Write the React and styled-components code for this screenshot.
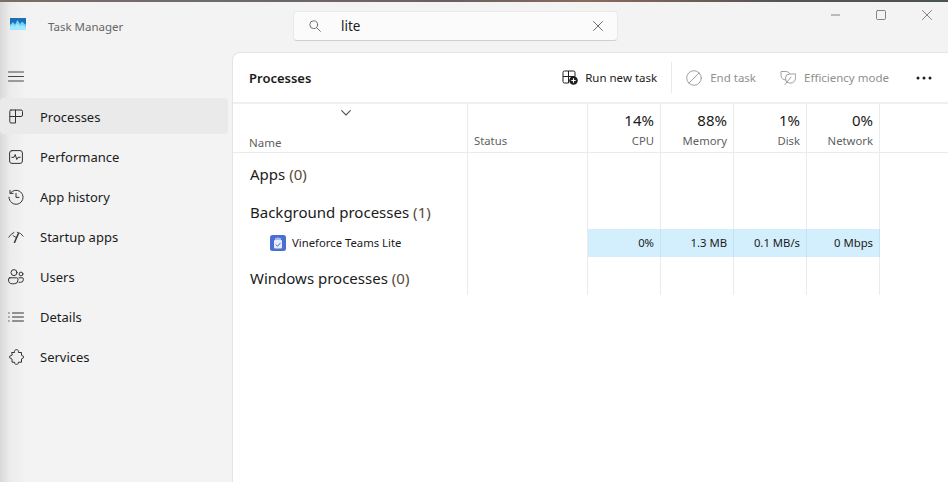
import React from 'react';
import styled, { createGlobalStyle } from 'styled-components';

const GlobalStyle = createGlobalStyle`
  html, body {
    margin: 0;
    height: 100%;
    overflow: hidden;
  }
  body {
    font-family: "Noto Sans", "Open Sans", "Liberation Sans", sans-serif;
    color: #1b1b1b;
  }
  * {
    box-sizing: border-box;
  }
`;

const Window = styled.div`
  width: 948px;
  height: 482px;
  display: flex;
  flex-direction: column;
  background: linear-gradient(90deg, #d9d9d9 0, #ececec 10px, #f2f2f2 24px, #f3f3f3 34px);
`;

const TopEdge = styled.div`
  height: 2px;
  flex: none;
  background: linear-gradient(90deg, #7b6d68 0, #6f6a6c 22%, #6a5f60 48%, #8a6a5e 62%, #5b5555 80%, #4a5252 100%);
`;

const TitleBar = styled.header`
  height: 50px;
  flex: none;
  display: flex;
  align-items: flex-start;
`;

const AppBrand = styled.div`
  width: 293px;
  flex: none;
  display: flex;
  align-items: flex-start;
  gap: 22px;
  padding: 16px 0 0 10px;
`;

const AppTitle = styled.span`
  font-size: 11.5px;
  line-height: 18px;
  color: #666;
`;

const SearchBox = styled.div`
  width: 325px;
  height: 30px;
  margin-top: 9px;
  flex: none;
  display: flex;
  align-items: center;
  padding: 0 14px 0 15px;
  background: #fbfbfb;
  border: 1px solid #e9e9e9;
  border-bottom-color: #d0d0d0;
  border-radius: 4px;
`;

const SearchText = styled.span`
  flex: 1;
  margin-left: 20px;
  font-size: 13.5px;
  color: #1b1b1b;
`;

const WindowControls = styled.div`
  margin-left: auto;
  display: flex;
  align-items: flex-start;
  gap: 36px;
  padding: 8px 16px 0 0;
`;

const Body = styled.div`
  flex: 1;
  display: flex;
  min-height: 0;
`;

const Sidebar = styled.nav`
  width: 232px;
  flex: none;
  display: flex;
  flex-direction: column;
  padding-right: 4px;
`;

const MenuButton = styled.div`
  height: 46px;
  flex: none;
  display: flex;
  align-items: center;
  padding: 2px 0 0 8px;
`;

const NavList = styled.ul`
  list-style: none;
  margin: 0;
  padding: 0;
  display: flex;
  flex-direction: column;
  gap: 4px;
`;

const NavItem = styled.li`
  height: 36px;
  display: flex;
  align-items: center;
  gap: 16px;
  padding: 1px 0 0 8px;
  border-radius: 4px;
  font-size: 13px;
  color: #1b1b1b;
  background: ${(p) => (p.$active ? '#eaeaea' : 'transparent')};
`;

const NavIcon = styled.span`
  width: 16px;
  height: 16px;
  flex: none;
  display: flex;
  align-items: center;
  justify-content: center;
`;

const Panel = styled.main`
  flex: 1;
  min-width: 0;
  display: flex;
  flex-direction: column;
  background: #fff;
  border-left: 1px solid #e5e5e5;
  border-top: 1px solid #e5e5e5;
  border-top-left-radius: 8px;
`;

const Toolbar = styled.div`
  height: 51px;
  flex: none;
  display: flex;
  align-items: center;
  padding: 0 16px;
  border-bottom: 2px solid #efefef;
`;

const PageTitle = styled.h1`
  margin: 0;
  font-size: 13px;
  font-weight: 600;
  color: #1b1b1b;
`;

const Actions = styled.div`
  margin-left: auto;
  display: flex;
  align-items: center;
`;

const ActionButton = styled.div`
  display: flex;
  align-items: center;
  gap: ${(p) => p.$iconGap || 8}px;
  font-size: 11.5px;
  color: ${(p) => (p.$disabled ? '#8f8f8f' : '#1b1b1b')};
  margin-right: ${(p) => p.$gap || 0}px;
`;

const Divider = styled.div`
  width: 1px;
  height: 31px;
  background: #eaeaea;
  margin: 0 14px;
`;

const Table = styled.div`
  display: flex;
  flex-direction: column;
`;

const Row = styled.div`
  display: grid;
  grid-template-columns: 235px 120px 73px 73px 73px 73px;
  height: ${(p) => p.$height}px;
`;

const HeaderRow = styled(Row)`
  border-bottom: 1px solid #ebebeb;
`;

const Cell = styled.div`
  border-right: 1px solid #ebebeb;
  min-width: 0;
`;

const NameHeader = styled(Cell)`
  display: flex;
  flex-direction: column;
  padding: 3px 0 0 16px;
  font-size: 11.5px;
  color: #5f5f5f;
`;

const SortMark = styled.div`
  height: 22px;
  padding-left: 92px;
  display: flex;
`;

const ColumnLabel = styled.span`
  line-height: 18px;
  margin-top: 5px;
`;

const StatusHeader = styled(Cell)`
  display: flex;
  align-items: flex-end;
  padding: 0 0 2px 6px;
  font-size: 11.3px;
  line-height: 18px;
  color: #5f5f5f;
`;

const MetricHeader = styled(Cell)`
  display: flex;
  flex-direction: column;
  align-items: flex-end;
  justify-content: flex-end;
  padding: 0 6px 2px 0;
`;

const MetricValue = styled.span`
  font-size: 15px;
  line-height: 20px;
  color: #1b1b1b;
`;

const MetricLabel = styled.span`
  font-size: 11.3px;
  line-height: 18px;
  margin-top: 2px;
  color: #5f5f5f;
`;

const GroupName = styled(Cell)`
  display: flex;
  align-items: center;
  padding: ${(p) => p.$top || 0}px 0 2px 17px;
  font-size: 15px;
  color: #1b1b1b;
`;

const Count = styled.span`
  color: #5a4a3a;
  margin-left: 4px;
`;

const ProcessName = styled(Cell)`
  display: flex;
  align-items: center;
  gap: 6px;
  padding-left: 37px;
  font-size: 11.3px;
`;

const ProcessLabel = styled.span`
  padding-bottom: 1px;
`;

const DataCell = styled(Cell)`
  display: flex;
  align-items: center;
  justify-content: flex-end;
  padding: 0 6px 1px 0;
  font-size: 11.3px;
  background: #d3eefd;
  border-right-color: #c6e2f2;
`;

const Stroke = styled.svg`
  display: block;
  flex: none;
  fill: none;
  stroke: ${(p) => p.$color || '#333'};
  stroke-width: ${(p) => p.$weight || 1};
  stroke-linecap: round;
  stroke-linejoin: round;
`;

const TaskIcon = () => (
  <svg width="16" height="12" viewBox="0 0 16 12" style={{ display: 'block' }}>
    <path d="M0 0h16v12H0z" fill="#39a7e8" />
    <path d="M0 0h16v6.5H0z" fill="#1a6fb5" />
    <path d="M0 7l3-3 2 2.5L7.5 2 10 6l2-2.5L16 7v5H0z" fill="#6fd0fa" />
    <path d="M0 9l3-2.5 2 2 2.5-3L10 8.5l2-1.5 4 2v3H0z" fill="#a5e6ff" />
  </svg>
);

const CloseGlyph = ({ size = 10, color = '#5c5c5c' }) => (
  <Stroke width={size} height={size} viewBox="0 0 10 10" $color={color} $weight={0.9}>
    <path d="M.5.5l9 9M9.5.5l-9 9" />
  </Stroke>
);

const SearchGlyph = () => (
  <Stroke width="12" height="12" viewBox="0 0 12 12" $color="#6b6b6b" $weight={0.95}>
    <circle cx="4.7" cy="4.7" r="3.9" />
    <path d="M7.6 7.6l3.8 3.8" />
  </Stroke>
);

const navIcons = {
  processes: (
    <Stroke width="14" height="15" viewBox="0 0 14 15">
      <path d="M2 1H12A1.500 1.500 0 0 1 13.500 2.500V6A1.500 1.500 0 0 1 12 7.500H.8V2.200A1.200 1.200 0 0 1 2 1ZM.8 7.500V12.800A1.200 1.200 0 0 0 2 14H6.500V1" />
    </Stroke>
  ),
  performance: (
    <Stroke width="14" height="14" viewBox="0 0 14 14">
      <rect x=".6" y=".6" width="12.800" height="12.800" rx="2.400" />
      <path d="M2.800 7.300H5L6.200 4.500 7.800 9.500 9 7.300h2.200" />
    </Stroke>
  ),
  history: (
    <Stroke width="16" height="16" viewBox="0 0 16 16">
      <path d="M2.300 4.200A7 7 0 1 1 1 8.200M2 1.300v3.100h3.100M8 4.500v3.900h3" />
    </Stroke>
  ),
  startup: (
    <svg width="16" height="12" viewBox="0 0 16 12" style={{ display: 'block' }}>
      <path d="M.8 6.200Q2.800 2.600 6 1.400M9.300 1.200Q13.200 1.800 15.200 5.200M5 4.600L8.300 6.600" fill="none" stroke="#444" strokeWidth="1" strokeLinecap="round" />
      <path d="M6.500 11.500L10.300 2.800" fill="none" stroke="#333" strokeWidth="1.500" strokeLinecap="round" />
    </svg>
  ),
  users: (
    <Stroke width="16" height="16" viewBox="0 0 16 16">
      <circle cx="6" cy="3.600" r="3" />
      <circle cx="13" cy="5" r="1.900" />
      <path d="M1.800 8.800H8.700A1.300 1.300 0 0 1 10 10.100V11A3.800 3.800 0 0 1 6.200 14.800H4.500A3.800 3.800 0 0 1 .6 11V10A1.200 1.200 0 0 1 1.800 8.800ZM11 8.800H14.200A1.200 1.200 0 0 1 15.400 10V10.500A2.800 2.800 0 0 1 12.600 13.300H11" />
    </Stroke>
  ),
  details: (
    <Stroke width="16" height="10" viewBox="0 0 16 10">
      <path d="M4.500 1H15.500M4.500 5H15.500M4.500 9H15.500M.7 1H1.200M.7 5H1.200M.7 9H1.200" />
    </Stroke>
  ),
  services: (
    <Stroke width="15" height="16" viewBox="0 0 15 16">
      <path d="M3 3.500H5.600C5 1.800 6 .7 7.500 .7S10 1.800 9.400 3.500H12.500V6.300L14.400 7.200 14.500 8.800 12.500 9.900V13.200H9.400C9.800 14.600 8.800 15.300 7.500 15.300S5.200 14.600 5.600 13.200H3V10.100L.7 8.800V7.200L3 6.100Z" />
    </Stroke>
  ),
};

const navItems = [
  { key: 'processes', label: 'Processes', active: true },
  { key: 'performance', label: 'Performance' },
  { key: 'history', label: 'App history' },
  { key: 'startup', label: 'Startup apps' },
  { key: 'users', label: 'Users' },
  { key: 'details', label: 'Details' },
  { key: 'services', label: 'Services' },
];

const metrics = [
  { value: '14%', label: 'CPU', usage: '0%' },
  { value: '88%', label: 'Memory', usage: '1.3 MB' },
  { value: '1%', label: 'Disk', usage: '0.1 MB/s' },
  { value: '0%', label: 'Network', usage: '0 Mbps' },
];

const EmptyCells = () => (
  <>
    <Cell />
    {metrics.map((m) => (
      <Cell key={m.label} />
    ))}
  </>
);

const GroupRow = ({ height, top, name, count }) => (
  <Row $height={height}>
    <GroupName $top={top}>
      {name}
      <Count>({count})</Count>
    </GroupName>
    <EmptyCells />
  </Row>
);

const App = () => {
  return (
    <Window>
      <GlobalStyle />
      <TopEdge />
      <TitleBar>
        <AppBrand>
          <TaskIcon />
          <AppTitle>Task Manager</AppTitle>
        </AppBrand>
        <SearchBox>
          <SearchGlyph />
          <SearchText>lite</SearchText>
          <CloseGlyph />
        </SearchBox>
        <WindowControls>
          <Stroke width="9" height="16" viewBox="0 0 9 16" $color="#777" $weight={0.9}>
            <path d="M0 5h9" />
          </Stroke>
          <Stroke width="10" height="10" viewBox="0 0 10 10" $color="#777" $weight={0.9}>
            <rect x=".5" y=".5" width="9" height="9" rx="1.200" />
          </Stroke>
          <CloseGlyph size={10} color="#777" />
        </WindowControls>
      </TitleBar>
      <Body>
        <Sidebar>
          <MenuButton>
            <Stroke width="16" height="11" viewBox="0 0 16 11" $color="#333" $weight={0.9}>
              <path d="M.5 1h15M.5 5.500h15M.5 10h15" />
            </Stroke>
          </MenuButton>
          <NavList>
            {navItems.map((item) => (
              <NavItem key={item.key} $active={item.active}>
                <NavIcon>{navIcons[item.key]}</NavIcon>
                {item.label}
              </NavItem>
            ))}
          </NavList>
        </Sidebar>
        <Panel>
          <Toolbar>
            <PageTitle>Processes</PageTitle>
            <Actions>
              <ActionButton $iconGap={7}>
                <svg width="16" height="15" viewBox="0 0 16 15" style={{ display: 'block' }}>
                  <path d="M6.500 13H2.500A1.500 1.500 0 0 1 1 11.500V2.500A1.500 1.500 0 0 1 2.500 1H11.500A1.500 1.500 0 0 1 13 2.500V6.500M1 6.500H13M6.500 1V13" fill="none" stroke="#1f1f1f" strokeWidth="1" />
                  <circle cx="11.500" cy="10.500" r="4.300" fill="#1f1f1f" />
                  <path d="M11.500 8.300v4.400M9.300 10.500h4.400" stroke="#fff" strokeWidth="1.100" />
                </svg>
                Run new task
              </ActionButton>
              <Divider />
              <ActionButton $disabled $gap={24}>
                <Stroke width="16" height="16" viewBox="0 0 16 16" $color="#a0a0a0">
                  <circle cx="8" cy="8" r="7.300" />
                  <path d="M3 13L13 3" />
                </Stroke>
                End task
              </ActionButton>
              <ActionButton $disabled $gap={27}>
                <Stroke width="16" height="15" viewBox="0 0 16 15" $color="#a0a0a0">
                  <path d="M15.500 4H9.500A4 4 0 0 0 5.500 8V9A4 4 0 0 0 9.500 13H11A4.500 4.500 0 0 0 15.500 8.500ZM9.800 4A3.500 3.500 0 0 0 6.500 1.500H1V5.500A4.500 4.500 0 0 0 5.500 10M5 14.500L11 7" />
                </Stroke>
                Efficiency mode
              </ActionButton>
              <Stroke width="16" height="4" viewBox="0 0 16 4" style={{ stroke: 'none', fill: '#1f1f1f' }}>
                <circle cx="2" cy="2" r="1.500" />
                <circle cx="8" cy="2" r="1.500" />
                <circle cx="14" cy="2" r="1.500" />
              </Stroke>
            </Actions>
          </Toolbar>
          <Table>
            <HeaderRow $height={49}>
              <NameHeader>
                <SortMark>
                  <Stroke width="10" height="6" viewBox="0 0 10 6" $color="#555" $weight={1.100} style={{ marginTop: 3 }}>
                    <path d="M.7.700L5 5 9.300.700" />
                  </Stroke>
                </SortMark>
                <ColumnLabel>Name</ColumnLabel>
              </NameHeader>
              <StatusHeader>Status</StatusHeader>
              {metrics.map((m) => (
                <MetricHeader key={m.label}>
                  <MetricValue>{m.value}</MetricValue>
                  <MetricLabel>{m.label}</MetricLabel>
                </MetricHeader>
              ))}
            </HeaderRow>
            <GroupRow height={44} name="Apps" count={0} />
            <GroupRow height={32} name="Background processes" count={1} />
            <Row $height={28}>
              <ProcessName>
                <svg width="16" height="16" viewBox="0 0 16 16" style={{ display: 'block', flex: 'none' }}>
                  <rect width="16" height="16" rx="2.500" fill="#4a6fd4" />
                  <rect x="4" y="5" width="8" height="8.500" rx="1" fill="#e8edfb" />
                  <path d="M6 5V3M8 5V2.500M10 5V3" stroke="#e8edfb" strokeWidth="1.200" />
                  <path d="M5.800 9.500l1.700 1.800 3-3.400" fill="none" stroke="#4a6fd4" strokeWidth="1" />
                </svg>
                <ProcessLabel>Vineforce Teams Lite</ProcessLabel>
              </ProcessName>
              <Cell />
              {metrics.map((m) => (
                <DataCell key={m.label}>{m.usage}</DataCell>
              ))}
            </Row>
            <GroupRow height={38} top={6} name="Windows processes" count={0} />
          </Table>
        </Panel>
      </Body>
    </Window>
  );
};

export default App;
